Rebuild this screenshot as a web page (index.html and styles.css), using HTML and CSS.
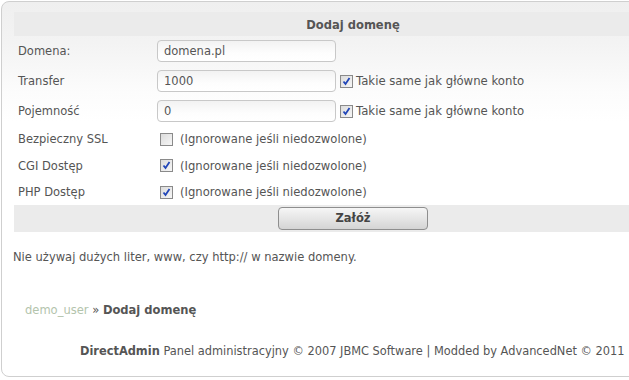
FILE: index.html
```html
<!DOCTYPE html>
<html lang="pl">
<head>
<meta charset="utf-8">
<title>Dodaj domenę</title>
<link rel="stylesheet" href="styles.css">
</head>
<body>
<div class="box">
  <form class="form">
    <table class="list">
      <tr class="head"><td colspan="2">Dodaj domenę</td></tr>
      <tr class="r-input">
        <td class="lbl">Domena:</td>
        <td class="val"><span class="field">domena.pl</span></td>
      </tr>
      <tr class="r-input">
        <td class="lbl">Transfer</td>
        <td class="val"><span class="field">1000</span><span class="cb on"><svg viewBox="0 0 13 13" width="13" height="13"><path d="M3.5 6.5 L5.5 9 L9.5 3" fill="none" stroke="#2146b8" stroke-width="1.8"/></svg></span><span class="cbt">Takie same jak główne konto</span></td>
      </tr>
      <tr class="r-input">
        <td class="lbl">Pojemność</td>
        <td class="val"><span class="field">0</span><span class="cb on"><svg viewBox="0 0 13 13" width="13" height="13"><path d="M3.5 6.5 L5.5 9 L9.5 3" fill="none" stroke="#2146b8" stroke-width="1.8"/></svg></span><span class="cbt">Takie same jak główne konto</span></td>
      </tr>
      <tr class="r-check">
        <td class="lbl">Bezpieczny SSL</td>
        <td class="val"><span class="cb first"></span><span class="cbt2">(Ignorowane jeśli niedozwolone)</span></td>
      </tr>
      <tr class="r-check mid">
        <td class="lbl">CGI Dostęp</td>
        <td class="val"><span class="cb first on"><svg viewBox="0 0 13 13" width="13" height="13"><path d="M3.5 6.5 L5.5 9 L9.5 3" fill="none" stroke="#2146b8" stroke-width="1.8"/></svg></span><span class="cbt2">(Ignorowane jeśli niedozwolone)</span></td>
      </tr>
      <tr class="r-check">
        <td class="lbl">PHP Dostęp</td>
        <td class="val"><span class="cb first on"><svg viewBox="0 0 13 13" width="13" height="13"><path d="M3.5 6.5 L5.5 9 L9.5 3" fill="none" stroke="#2146b8" stroke-width="1.8"/></svg></span><span class="cbt2">(Ignorowane jeśli niedozwolone)</span></td>
      </tr>
      <tr class="foot"><td colspan="2"><span class="btn">Załóż</span></td></tr>
    </table>
  </form>
  <p class="note">Nie używaj dużych liter, www, czy http:// w nazwie domeny.</p>
  <p class="crumbs"><span class="user">demo_user</span> » <b>Dodaj domenę</b></p>
  <p class="copy"><b>DirectAdmin</b> Panel administracyjny © 2007 JBMC Software | Modded by AdvancedNet © 2011</p>
</div>
</body>
</html>
```
FILE: styles.css
```css
html, body {
  margin: 0;
  padding: 0;
  overflow: hidden;
  background: #fff;
}
body {
  font-family: "DejaVu Sans", Verdana, sans-serif;
  font-size: 11.5px;
  color: #555;
}
.box {
  margin: 1px 0 0 1px;
  width: 800px;
  height: 376px;
  border: 1px solid #cfcfcf;
  border-radius: 8px;
  background: linear-gradient(#efefef 0, #f3f3f3 40px, #fcfcfc 90px, #fff 120px);
  box-sizing: border-box;
}
.form {
  padding: 10px 0 0 12px;
}
.list {
  width: 678px;
  border-collapse: collapse;
}
.list td {
  padding: 0;
}
.head td {
  height: 24px;
  background: #ebebeb;
  text-align: center;
  font-family: "DejaVu Sans Condensed", "DejaVu Sans", sans-serif;
  font-weight: bold;
  font-size: 12.8px;
  color: #555;
}
.lbl {
  width: 139px;
  padding-left: 4px !important;
  vertical-align: middle;
}
.r-input td {
  height: 30px;
}
.r-check td {
  height: 26px;
}
.r-check.mid td {
  height: 27px;
}
.val {
  white-space: nowrap;
}
.field {
  display: inline-block;
  vertical-align: middle;
  box-sizing: border-box;
  width: 179px;
  height: 22px;
  line-height: 20px;
  padding: 0 6px;
  border: 1px solid #c8c8c8;
  border-radius: 4px;
  background: linear-gradient(#f2f2f2, #fdfdfd 60%, #fff);
  color: #555;
}
.cb {
  display: inline-block;
  vertical-align: middle;
  box-sizing: border-box;
  width: 13px;
  height: 13px;
  margin-left: 4px;
  border: 1px solid #8a8a8a;
  background: linear-gradient(135deg, #dcdcdc, #f6f6f6);
  position: relative;
}
.cb svg {
  position: absolute;
  left: -1px;
  top: -1px;
}
.cb.first {
  margin-left: 3px;
}
.cbt {
  vertical-align: middle;
  margin-left: 3px;
  font-size: 11.7px;
}
.cbt2 {
  vertical-align: middle;
  margin-left: 7px;
  font-size: 11.6px;
}
.foot td {
  height: 27px;
  background: #ebebeb;
  text-align: center;
}
.btn {
  display: inline-block;
  box-sizing: border-box;
  width: 150px;
  height: 23px;
  line-height: 21px;
  border: 1px solid #8e8e8e;
  border-radius: 4px;
  background: linear-gradient(#f6f6f6, #e2e2e2 60%, #d4d4d4);
  font-weight: bold;
  color: #444;
}
.note {
  margin: 17px 0 0 11px;
  font-family: "DejaVu Sans Condensed", "DejaVu Sans", sans-serif;
  font-size: 12.8px;
}
.crumbs {
  margin: 38px 0 0 23px;
  font-family: "DejaVu Sans Condensed", "DejaVu Sans", sans-serif;
  font-size: 12.8px;
}
.user {
  color: #b3c4ac;
}
.crumbs b {
  color: #555;
}
.copy {
  margin: 27px 0 0 78px;
  white-space: nowrap;
  font-size: 11.4px;
}
```
